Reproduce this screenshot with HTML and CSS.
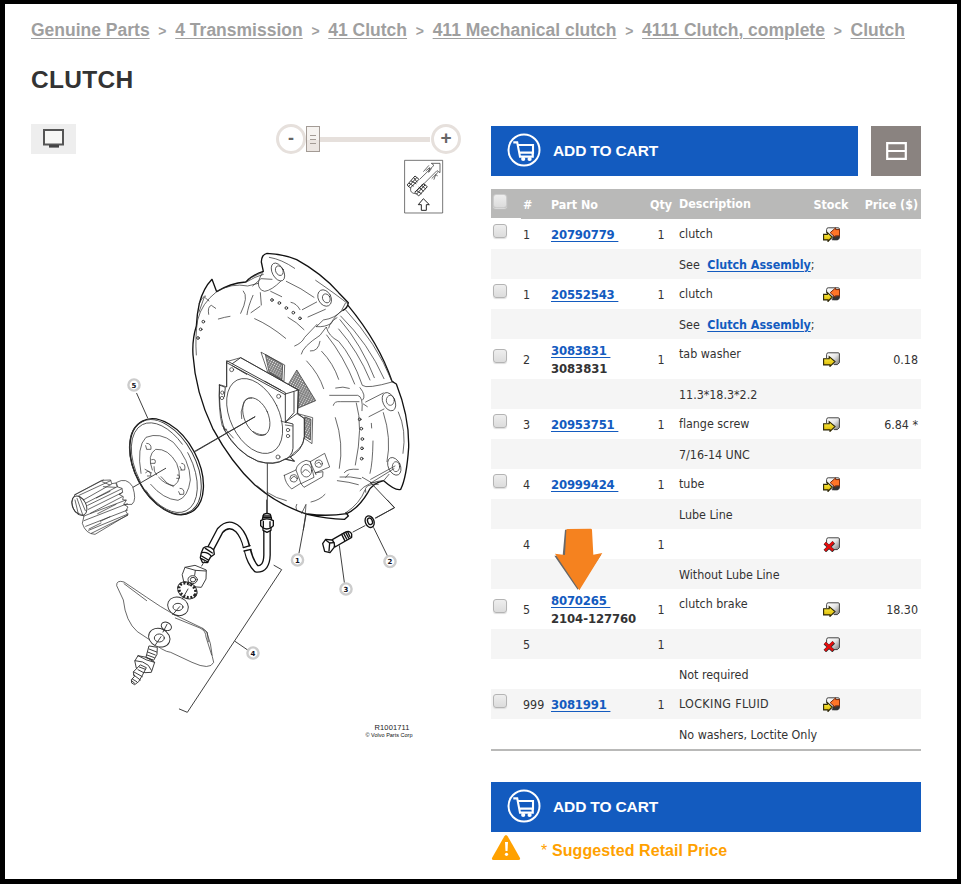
FILE: index.html
```html
<!DOCTYPE html>
<html lang="en">
<head>
<meta charset="utf-8">
<title>Clutch</title>
<link rel="stylesheet" href="styles.css">
</head>
<body>
<svg class="defs" width="0" height="0">
  <defs>
    <linearGradient id="boxfill" x1="0" y1="0" x2="1" y2="1"><stop offset="0" stop-color="#fff"/><stop offset=".45" stop-color="#e8e8e8"/><stop offset="1" stop-color="#777"/></linearGradient>
    <linearGradient id="yellow" x1="0" y1="0" x2="0" y2="1"><stop offset="0" stop-color="#fff04a"/><stop offset="1" stop-color="#d9b500"/></linearGradient>
    <pattern id="mesh" width="7" height="6" patternUnits="userSpaceOnUse" patternTransform="rotate(28)"><path d="M0 1H7M0 4H5" stroke="#222" stroke-width="1.7"/></pattern>
    <symbol id="base" viewBox="0 0 17 15"><path d="M4.5 1.2H15.3Q16.4 1.2 16.4 2.3V11L14.2 12.8H4.5Z" fill="url(#boxfill)"/><path d="M3.6 6V2.6Q3.6 .8 5.2 .8H15.2Q16.4 .8 16.4 2V10.6L14.4 12.6H11" fill="none" stroke="#444" stroke-width="1"/></symbol>
    <symbol id="instock" viewBox="0 0 17 15"><use href="#base"/><path d="M.6 6.7H6.2V4.6L12 9.6L7 14.4V12.9H.6Z" fill="url(#yellow)" stroke="#2b2505" stroke-width="1.1"/></symbol>
    <symbol id="backorder" viewBox="0 0 17 15"><use href="#base"/><path d="M10 9.2L16.5 9V12L14.5 13.2H9Z" fill="#333"/><path d="M16.6 2.6H12.6V.9L7.2 5.7L12.3 10.3V8.8H16.6Z" fill="#ff7528" stroke="#7a2b0c" stroke-width="1"/><path d="M.6 7.4H4.3V5.4L9.2 10L5 14.5V12.9H.6Z" fill="url(#yellow)" stroke="#2b2505" stroke-width="1.1"/></symbol>
    <symbol id="none" viewBox="0 0 17 15"><use href="#base"/><path d="M1.8 6.2L10.6 14M10.8 5.4L1.8 14" stroke="#333" stroke-width="3.6"/><path d="M2 5.8L10 13.4M10.4 5.2L2 13.6" stroke="#e80c0c" stroke-width="2.4"/></symbol>
    <symbol id="cart" viewBox="0 0 34 34"><circle cx="17" cy="17" r="15.5" fill="none" stroke="#fff" stroke-width="2"/><path d="M6.3 9.4H10.2L13 23.6H25.8V20.6H24.5M11.3 12H26V19.6H12.6" fill="none" stroke="#fff" stroke-width="2.1"/><circle cx="16.2" cy="26" r="2.1" fill="#fff"/><circle cx="22.6" cy="26" r="2.1" fill="#fff"/></symbol>
  </defs>
</svg>
<div class="page">
  <nav class="crumbs">
    <a href="#">Genuine Parts</a><span>&gt;</span><a href="#">4 Transmission</a><span>&gt;</span><a href="#">41 Clutch</a><span>&gt;</span><a href="#">411 Mechanical clutch</a><span>&gt;</span><a href="#">4111 Clutch, complete</a><span>&gt;</span><a href="#">Clutch</a>
  </nav>
  <h1>CLUTCH</h1>
  <main class="columns">
    <section class="figure">
      <div class="tools">
        <button class="screen" aria-label="Full screen"><svg width="24" height="20" viewBox="0 0 24 20"><rect x="2" y="1" width="19" height="14.5" fill="#f7f7f5" stroke="#555" stroke-width="2"/><path d="M7 16H17V18.6H7Z" fill="#444"/></svg></button>
        <div class="slider"><b class="knob minus">-</b><span class="track"><i class="thumb"></i></span><b class="knob plus">+</b></div>
      </div>
      <svg class="diagram" width="430" height="600" viewBox="31 154 430 600">
        <g class="fine" transform="translate(0 0) scale(.33333)">
          <rect x="1215" y="481" width="113" height="158" stroke="#444"/>
          <path d="M1260 537L1302 496L1294 490H1320V518L1311 512L1249 574M1232 564Q1228 580 1246 581M1271 514L1286 497M1278 512L1289 503L1286 517L1294 506M1296 535L1313 518M1302 538L1307 524L1312 527"/>
          <path d="M1222 554L1245 528L1257 538L1232 563ZM1245 576L1270 551L1282 560L1257 587ZM1228 550L1240 558M1234 543L1248 551M1242 534L1251 546M1250 572L1264 581M1257 562L1270 573M1265 556L1276 566M1225 560L1250 533M1250 582L1275 555" stroke-width="3"/>
          <path d="M1271 597L1288 614H1279V631H1264V614H1256Z" stroke="#222" stroke-width="3"/>
        </g>
        <g class="fine" transform="translate(180 240) scale(.33333)">
          <path class="bold" d="M110 155L96 118Q70 145 58 190Q51 220 49 258Q36 300 39 345Q46 455 98 565Q155 670 224 734Q295 795 382 823Q440 836 494 838L505 828L498 818M110 155Q150 130 197 126Q218 104 250 94L244 66Q245 43 261 40Q310 42 350 59Q425 100 476 158L505 188Q503 204 489 211M504 196Q598 310 636 424L649 432Q688 530 686 622Q680 712 662 748Q646 753 611 722Q576 730 564 757Q535 805 500 821Q440 830 383 822"/>
          <path d="M489 211Q463 227 454 250Q435 262 409 260M250 94Q236 116 235 130L203 138Q155 128 110 155Q65 190 53 240Q45 290 49 345M235 130Q235 150 254 154Q275 151 302 124M218 138L243 116L276 118M199 126Q225 110 250 103M203 118L245 98M268 52Q305 58 344 85M407 121Q475 168 503 191M319 124Q365 145 402 172M367 209L410 186M384 231L436 208M409 260L430 240Q466 235 485 211L496 190M344 318Q366 309 374 292L411 253M364 342Q368 320 420 286L439 261Q445 288 476 304Q517 350 547 436Q560 448 640 425M224 236Q270 256 317 295M333 187Q350 190 360 209M372 269Q350 246 324 232M272 154L305 170M241 158L244 195M190 153Q207 170 182 220M219 166Q204 200 201 224M213 218L240 199M115 237Q135 231 150 229M86 223Q82 200 94 196L107 205M57 216L73 171L87 183M58 190Q70 165 77 168M391 333Q415 335 420 304"/>
          <path d="M440 285Q492 350 524 432M446 264Q450 245 471 233M476 267Q535 335 570 420M480 239Q545 315 583 413M482 228Q565 310 612 416M498 211Q590 310 635 422M425 334Q460 370 476 418M380 363Q417 402 431 446M467 444Q490 438 508 445M449 466H533Q550 470 546 512M460 496Q462 483 481 485H537M529 489Q550 560 526 675M466 533Q492 610 478 685M540 443Q560 468 548 480M557 486L610 459M562 500L550 492M567 530L612 507M610 518Q635 595 621 665M579 603Q578 670 570 700M574 550L575 564M655 516Q680 570 669 640M574 728L642 686M572 718L645 678M547 712L573 727L587 729M493 698Q500 685 535 688M480 711Q510 708 543 716M472 722Q510 726 535 734M540 752Q560 727 612 721L627 703M498 818Q540 790 555 750M350 810Q345 800 350 793M365 820L378 793L376 820M393 786Q420 780 435 763M256 757L232 738M261 757Q290 776 319 782M557 757Q548 730 595 733M497 712L506 702"/>
          <g><ellipse cx="294" cy="96" rx="17" ry="29" transform="rotate(-28 294 96)"/><ellipse cx="298" cy="92" rx="11" ry="15" transform="rotate(-25 298 92)"/><ellipse cx="434" cy="174" rx="19" ry="26" transform="rotate(-28 434 174)"/><ellipse cx="439" cy="175" rx="11" ry="14" transform="rotate(-28 439 175)"/><ellipse cx="627" cy="485" rx="18" ry="29" transform="rotate(-25 627 485)"/><ellipse cx="631" cy="481" rx="12" ry="15"/><ellipse cx="643" cy="679" rx="18" ry="28" transform="rotate(-25 643 679)"/><ellipse cx="648" cy="680" rx="11" ry="15"/></g>
          <g class="holes"><circle cx="276" cy="180" r="4"/><circle cx="298" cy="189" r="4"/><circle cx="319" cy="204" r="4"/><circle cx="340" cy="218" r="4"/><circle cx="360" cy="235" r="4"/><circle cx="70" cy="245" r="4"/><circle cx="62" cy="268" r="4"/><circle cx="54" cy="294" r="4"/><circle cx="539" cy="538" r="4"/><circle cx="544" cy="566" r="4"/><circle cx="547" cy="597" r="4"/><circle cx="546" cy="625" r="4"/><circle cx="545" cy="656" r="4"/></g>
          <g fill="url(#mesh)"><path fill="none" d="M244 337L314 375L312 424L264 396Z"/><path d="M257 344L308 374L306 419L268 396Z"/><path d="M351 391L407 482L353 505L355 450L325 435Z"/><path fill="none" d="M353 521L398 533L396 611L373 595Z"/><path d="M375 531L393 538L391 600L375 590Z"/></g>
          <path fill="#fff" d="M118 435Q121 433 140 441V365L182 353L355 450L353 523L373 535V590Q371 620 340 640L332 653L344 663L316 658Q280 676 235 665Q165 635 126 555Q115 510 118 435Z"/>
          <path class="mid" d="M140 440V362L316 458V547M140 368L314 463M157 371L182 353L355 450L316 462M342 456V518L318 545M355 450L352 520L316 546L339 552V625Q336 650 315 658M353 520L373 536V590Q369 635 322 655M158 378L200 403M255 424L302 450M118 435L136 442L133 470M119 435Q114 500 133 570Q172 640 233 663Q285 680 315 657L343 664L331 651"/>
          <ellipse cx="224" cy="528" rx="73" ry="120" transform="rotate(-26 224 528)"/><ellipse cx="229" cy="530" rx="36" ry="60" transform="rotate(-24 229 530)"/>
          <path d="M215 474Q192 472 189 496Q180 515 185 536M220 575Q240 588 257 583M316 555L337 558M303 543L319 548M128 558L160 594M132 560V568H140"/>
          <g><circle cx="155" cy="389" r="6"/><circle cx="296" cy="469" r="6"/><circle cx="294" cy="651" r="6"/><circle cx="127" cy="458" r="5"/><circle cx="126" cy="474" r="5"/><circle cx="324" cy="570" r="5"/><circle cx="324" cy="588" r="5"/></g>
          <path class="mid" d="M47 634L224 531M262 671V818M377 823L370 870M571 727L643 803L588 834"/>
          <path fill="#fff" d="M313 706L348 690Q350 670 378 661L391 665L434 640L449 681L405 699L429 695L428 710L372 742L362 730L335 747Q315 730 313 706Z"/><path d="M348 690L363 731L402 712L391 664M391 667L408 704"/>
          <circle cx="341" cy="715" r="11"/><ellipse cx="379" cy="692" rx="16" ry="19"/><circle cx="416" cy="671" r="11"/><path d="M334 716Q342 702 350 715M368 697Q375 680 389 697M410 671Q418 660 423 674"/>
        </g>
        <g class="fine" transform="translate(60 370) scale(.33333)">
          <ellipse class="bold" cx="320" cy="290" rx="94" ry="155" transform="rotate(-28 320 290)" fill="#fff"/><ellipse class="mid" cx="316" cy="291" rx="91" ry="153" transform="rotate(-28 316 291)"/><ellipse cx="313" cy="293" rx="83" ry="145" transform="rotate(-27 313 293)" stroke-dasharray="330 30"/>
          <path d="M243 310Q229 230 258 202Q300 185 340 217Q390 270 391 330Q384 382 354 391Q310 388 272 343M277 300Q260 255 287 238Q325 235 350 280Q370 330 342 347Q317 345 296 322M282 290Q280 305 290 315M303 320Q320 343 340 350"/>
          <path d="M260 220Q275 220 273 238H262M257 308Q270 296 273 318H262M365 280Q378 280 374 300H362M360 355Q375 355 371 373H361M275 269Q290 265 285 280H272M352 315Q360 313 358 325H350M260 238L257 227M365 300L360 290M360 374L356 365M255 298L275 309"/>
          <path class="mid" d="M230 70L263 144M402 245L585 140M217 353L317 295"/>
          <path fill="#fff" d="M170 337Q200 320 218 350Q231 390 216 403L190 404Z"/>
          <path fill="#fff" d="M45 374L125 331L152 330L155 341L168 339L171 350L186 355L188 367L177 373L190 380L188 389L199 391L191 403L204 411L197 423L204 434L105 493Q77 492 67 460L72 438L45 425Q27 397 45 374Z"/>
          <ellipse class="mid" cx="58" cy="407" rx="20" ry="31" transform="rotate(-27 58 407)"/>
          <path d="M45 390L55 432M51 385L68 434M59 382L76 422M45 374L130 330M57 376L152 332M70 390L155 342M78 399L170 351M83 406L186 356M85 418L186 368M91 430L187 380M72 438L198 390M72 452L202 401M77 469L203 420M86 481L204 432M94 490L203 436M126 335L150 345M130 350L166 352M109 384L150 364M121 454L150 440M113 431L168 403M87 477L123 459"/>
        </g>
        <g class="fine" transform="translate(100 500) scale(.33333)">
          <path d="M500 0V45" class="mid"/>
          <path class="tube" d="M321 165Q344 123 360 92Q386 63 414 88Q432 107 440 141M443 151Q451 188 470 207Q500 208 501 165V92"/><path class="tubein" d="M321 165Q344 123 360 92Q386 63 414 88Q432 107 440 145M441 148Q451 188 470 207Q500 208 501 165V90"/>
          <path d="M430 143L450 137M432 153L453 148" class="bold"/>
          <g class="bold" fill="#fff"><path d="M487 58L491 43Q501 38 511 43L515 58Z"/><path d="M482 62Q500 51 520 62V77L513 83V91L501 97L489 91V83L482 77Z"/><path d="M490 64V80M510 65V80M489 48H512M489 53H514M488 83Q500 91 513 83"/>
          <path d="M310 144Q325 134 341 149L343 163L331 172L322 188L307 187L301 173L304 158Z"/><path d="M305 158Q322 154 334 169M305 168L325 180M304 176L324 186M316 145L337 159"/></g>
          <path d="M305 198L315 181" class="mid"/>
          <path fill="#fff" d="M223 344Q180 320 140 292L72 246Q49 239 50 257L70 300Q77 365 112 395L150 420Q189 455 212 457L276 487Q330 512 341 487L337 470Q334 430 320 396L306 384L223 344Z"/><path d="M226 354L300 384Q318 393 318 411L335 465M72 251L140 302M308 385L322 397L325 425"/>
          <g fill="#fff" class="mid"><path d="M247 223L255 202L285 196L319 210L318 237L304 262L277 260L252 245Z"/><path d="M255 202L286 211L317 213M286 211L284 226" /><ellipse cx="278" cy="239" rx="14" ry="12"/><ellipse cx="279" cy="239" rx="8" ry="7"/>
          <ellipse cx="262" cy="271" rx="27" ry="20" transform="rotate(30 262 271)" class="teeth"/><ellipse cx="262" cy="271" rx="31" ry="24" transform="rotate(30 262 271)" fill="none"/></g>
          <g fill="#fff" class="mid"><ellipse cx="234" cy="319" rx="32" ry="27" transform="rotate(25 234 319)"/><ellipse cx="234" cy="321" rx="15" ry="11"/><ellipse cx="199" cy="379" rx="16" ry="12" transform="rotate(25 199 379)"/><ellipse cx="178" cy="413" rx="33" ry="27" transform="rotate(25 178 413)"/><ellipse cx="178" cy="414" rx="15" ry="12"/><path d="M275 244L267 257M264 267L247 297M239 320L218 344M201 373L189 396M183 410L166 435"/>
          <path d="M148 438L172 442L171 463L161 481L139 472Z"/><path d="M105 482L114 467L139 472L164 487L154 517L135 518L110 505ZM105 482L128 486L145 496L154 511M114 467L140 480L164 487"/><path d="M147 447L170 456M143 456L166 465M141 465L163 473M138 473L158 480"/><path d="M122 495L139 503L126 528L116 545L104 554L95 549L94 539L103 530L100 517Z"/><path d="M118 501L136 508M114 509L131 518M102 516L127 530M100 524L121 540M97 537L110 545M96 543L104 550"/></g>
          <path class="mid" d="M522 196L545 209L262 637L238 627M405 424L443 450M619 40L597 159M718 137L733 247M821 83L863 169M759 96L795 77M862 0L884 23L826 54"/>
          <g class="bold" fill="#fff"><path d="M697 119L735 97Q750 90 755 102L755 112L705 141Z"/><path d="M668 131L677 118L696 120Q707 130 702 143L690 158L674 154Z"/><path d="M677 120L689 129L687 153M688 129L702 128M725 103L734 121M731 100L740 117M737 97L746 114M743 95L750 110"/><ellipse cx="809" cy="65" rx="13" ry="18" transform="rotate(-22 809 65)"/><ellipse cx="810" cy="64" rx="7" ry="10" transform="rotate(-22 810 64)"/></g>
        </g>
        <g class="callouts"><circle cx="134" cy="385" r="5.6"/><circle cx="297.5" cy="560" r="5.6"/><circle cx="390" cy="561.5" r="5.6"/><circle cx="346" cy="589" r="5.6"/><circle cx="253" cy="653" r="5.6"/></g>
        <g class="nums"><text x="134" y="387.5">5</text><text x="297.5" y="562.5">1</text><text x="390" y="564">2</text><text x="346" y="591.5">3</text><text x="253" y="655.5">4</text></g>
        <text x="374.5" y="730" class="ref" textLength="35">R1001711</text><text x="365.5" y="736.5" class="copy" textLength="47">© Volvo Parts Corp</text>
      </svg>
    </section>
    <section class="parts">
      <div class="actions">
        <button class="add"><svg width="34" height="34"><use href="#cart"/></svg><span>ADD TO CART</span></button>
        <button class="view" aria-label="View"><svg width="21" height="18" viewBox="0 0 21 18"><path d="M1.2 1.2H19.8V16.8H1.2ZM1 9H20" fill="none" stroke="#fff" stroke-width="2.2"/></svg></button>
      </div>
      <div class="table">
        <div class="row head"><span class="check"><i></i></span><span>#</span><span>Part No</span><span class="qty">Qty</span><span class="desc">Description</span><span class="stock">Stock</span><span class="price">Price ($)</span></div>
        <div class="row"><span class="check"><i></i></span><span>1</span><span class="part"><a href="#">20790779&nbsp;</a></span><span class="qty">1</span><span class="desc">clutch</span><span class="stock"><svg><use href="#backorder"/></svg></span><span class="price"></span></div>
        <div class="row note"><span class="desc">See <a href="#">Clutch Assembly</a>;</span></div>
        <div class="row"><span class="check"><i></i></span><span>1</span><span class="part"><a href="#">20552543&nbsp;</a></span><span class="qty">1</span><span class="desc">clutch</span><span class="stock"><svg><use href="#backorder"/></svg></span><span class="price"></span></div>
        <div class="row note"><span class="desc">See <a href="#">Clutch Assembly</a>;</span></div>
        <div class="row tall"><span class="check"><i></i></span><span>2</span><span class="part"><a href="#">3083831&nbsp;</a><b>3083831</b></span><span class="qty">1</span><span class="desc">tab washer</span><span class="stock"><svg><use href="#instock"/></svg></span><span class="price">0.18</span></div>
        <div class="row note"><span class="desc">11.3*18.3*2.2</span></div>
        <div class="row"><span class="check"><i></i></span><span>3</span><span class="part"><a href="#">20953751&nbsp;</a></span><span class="qty">1</span><span class="desc">flange screw</span><span class="stock"><svg><use href="#instock"/></svg></span><span class="price">6.84 *</span></div>
        <div class="row note"><span class="desc">7/16-14 UNC</span></div>
        <div class="row"><span class="check"><i></i></span><span>4</span><span class="part"><a href="#">20999424&nbsp;</a></span><span class="qty">1</span><span class="desc">tube</span><span class="stock"><svg><use href="#backorder"/></svg></span><span class="price"></span></div>
        <div class="row note"><span class="desc">Lube Line</span></div>
        <div class="row"><span class="check"></span><span>4</span><span class="part"></span><span class="qty">1</span><span class="desc"></span><span class="stock"><svg><use href="#none"/></svg></span><span class="price"></span></div>
        <div class="row note"><span class="desc">Without Lube Line</span></div>
        <div class="row tall"><span class="check"><i></i></span><span>5</span><span class="part"><a href="#">8070265&nbsp;</a><b>2104-127760</b>
          <svg class="pointer" width="54" height="66" viewBox="0 0 162 198"><path d="M38 8L115 6L120 84L146 84L76 188L6 86L31 86Z" fill="#444" opacity=".8" transform="translate(-5 0)" filter="blur(2px)"/><path d="M37 9Q37 6 41 6L110 5Q114 5 114 9L118 83L145 78L76 190L3 80L33 84Z" fill="#f5821f"/></svg></span><span class="qty">1</span><span class="desc">clutch brake</span><span class="stock"><svg><use href="#instock"/></svg></span><span class="price">18.30</span></div>
        <div class="row"><span class="check"></span><span>5</span><span class="part"></span><span class="qty">1</span><span class="desc"></span><span class="stock"><svg><use href="#none"/></svg></span><span class="price"></span></div>
        <div class="row note"><span class="desc">Not required</span></div>
        <div class="row"><span class="check"><i></i></span><span>999</span><span class="part"><a href="#">3081991&nbsp;</a></span><span class="qty">1</span><span class="desc caps">LOCKING FLUID</span><span class="stock"><svg><use href="#backorder"/></svg></span><span class="price"></span></div>
        <div class="row note"><span class="desc">No washers, Loctite Only</span></div>
      </div>
      <button class="add wide"><svg width="34" height="34"><use href="#cart"/></svg><span>ADD TO CART</span></button>
      <p class="msrp"><svg width="30" height="27" viewBox="0 0 30 27"><path d="M13.2 2.5Q15 -.5 16.8 2.5L29 24Q29.5 26 27.5 26H2.5Q.5 26 1 24Z" fill="#ffa100"/><path d="M14 8H17L16.5 17H14.5Z" fill="#fff"/><circle cx="15.5" cy="20.3" r="1.6" fill="#fff"/></svg><i>*</i><b>Suggested Retail Price</b></p>
    </section>
  </main>
</div>
</body>
</html>
```
FILE: styles.css
```css
* { box-sizing: border-box; }
body { margin: 0; background: #fff; font-family: "Liberation Sans", Arial, sans-serif; color: #333; }
.defs { position: absolute; }
.page { width: 961px; height: 884px; border: solid #000; border-width: 4px 4px 5px 5px; padding: 0 0 0 26px; overflow: hidden; }
button { border: 0; padding: 0; font: inherit; }

.crumbs { display: flex; margin-top: 15px; height: 22px; align-items: center; font-size: 17.5px; font-weight: bold; color: #9f9f9f; white-space: nowrap; }
.crumbs a { color: inherit; text-decoration-thickness: 1px; text-underline-offset: 2px; }
.crumbs span { width: 25.6px; text-align: center; font-size: 14px; padding-top: 2px; }
h1 { margin: 22px 0 0; height: 34px; line-height: 34px; font-size: 24.5px; font-weight: bold; letter-spacing: .3px; color: #333; }

.columns { display: flex; gap: 30px; margin-top: 27px; }
.figure { width: 430px; }
.tools { display: flex; justify-content: space-between; height: 30px; }
.screen { width: 45px; height: 30px; background: #eee; display: flex; justify-content: center; align-items: center; }
.slider { display: flex; align-items: center; width: 185px; }
.knob { width: 30px; height: 30px; border: 3px solid #e6e0dc; border-radius: 50%; line-height: 22px; text-align: center; font-size: 18px; color: #666; flex: none; }
.plus { margin-left: 1px; font-size: 19px; line-height: 21px; }
.track { flex: 1; height: 5px; background: #e6e0dc; display: flex; align-items: center; }
.thumb { width: 14px; height: 26px; border: 1px solid #a39b95; flex: none; background: repeating-linear-gradient(#a39b95 0 1px, transparent 1px 4px) 3px 8px / 6px 9px no-repeat, linear-gradient(#f6f3f0 55%, #ebe5e1 55%); }
.diagram { display: block; font-family: "Liberation Sans", sans-serif; }
.fine { fill: none; stroke: #333; stroke-width: 2.2; stroke-linecap: round; stroke-linejoin: round; }
.bold { stroke: #111; stroke-width: 4; }
.mid { stroke: #333; stroke-width: 2.8; }
.holes { stroke-width: 3; }
.tube { stroke: #111; stroke-width: 23; stroke-linecap: butt; }
.tubein { stroke: #fff; stroke-width: 15; stroke-linecap: butt; }
.teeth { stroke: #222; stroke-width: 9; stroke-linecap: butt; stroke-dasharray: 6 5; }
.callouts { fill: #fff; stroke: #ccc; stroke-width: 2.4; }
.nums { font: bold 7px "DejaVu Sans", sans-serif; text-anchor: middle; fill: #112; }
.ref { font-size: 7.5px; fill: #222; }
.copy { font-size: 5.5px; fill: #111; }

.parts { width: 430px; padding-top: 2px; }
.actions { display: flex; justify-content: space-between; }
.add { display: flex; align-items: center; width: 367px; height: 50px; padding: 0 0 2px 16px; gap: 12px; background: #135bbf; color: #fff; font-size: 15.5px; font-weight: bold; }
.add svg { flex: none; }
.add span { padding-top: 2px; letter-spacing: -.13px; }
.wide { width: 430px; margin-top: 31px; }
.view { width: 50px; height: 50px; background: #8a8380; display: flex; align-items: center; justify-content: center; }

.table { margin-top: 13px; border-bottom: 2px solid #b9b9b8; font: 12.4px "DejaVu Sans Condensed", "DejaVu Sans", sans-serif; font-stretch: condensed; letter-spacing: -.02px; color: #333; }
.row { display: grid; grid-template-columns: 32px 28px 96px 32px 131px 42px 69px; height: 30px; align-items: center; line-height: 18px; }
.row:nth-child(odd):not(.head) { background: #f5f5f5; }
.row > span { padding-top: 1px; white-space: nowrap; }
.tall { height: 40px; }
.row > .check { padding: 0 0 6px 2px; display: flex; }
.check i { width: 14px; height: 14px; border: 1px solid #b4b4b4; border-radius: 3px; background: linear-gradient(#eee, #dcdcdc); box-shadow: 0 1px 1px #ddd; }
.row a { color: #135bbf; font-weight: bold; text-decoration-thickness: 1px; text-underline-offset: 2px; }
.part { position: relative; font-weight: bold; font-size: 13px; letter-spacing: -.2px; }
.part a, .part b { display: block; width: max-content; }
.part b { letter-spacing: -.1px; }
.row > .qty { text-align: center; padding-right: 4px; }
.row > .desc { padding: 0 0 1px; }
.tall > .desc { padding-bottom: 11px; }
.row > .caps { letter-spacing: .35px; }
.note > .desc { grid-column: 5 / 8; padding-top: 1px; padding-bottom: 0; }
.note a { margin-left: 4px; }
.stock { display: flex; justify-content: center; }
.stock svg { width: 17px; height: 15px; }
.price { text-align: right; padding-right: 3px; }
.head { color: #fff; font-weight: bold; background: linear-gradient(#fff, #fff) 0 100% / 30px 1px no-repeat #b9b9b8; }
.head .check i { border-color: #ccc; }
.pointer { position: absolute; left: 3px; top: -64px; }

.msrp { margin: 2px 0 0; height: 30px; display: flex; color: #ffa100; font-size: 16px; letter-spacing: .08px; line-height: 33px; }
.msrp i { font-style: normal; margin-left: 20px; width: 11px; }
```
